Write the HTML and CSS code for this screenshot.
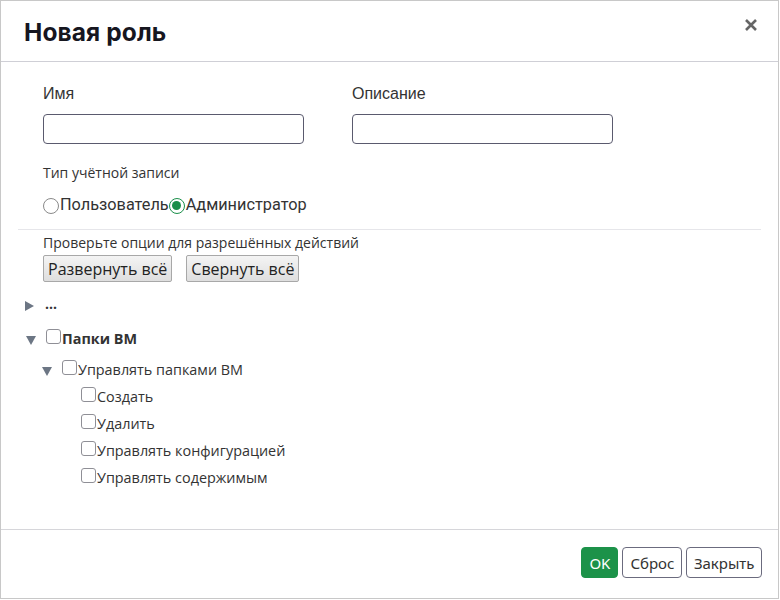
FILE: index.html
```html
<!DOCTYPE html>
<html lang="ru">
<head>
<meta charset="utf-8">
<link rel="stylesheet" href="styles.css">
</head>
<body>
<div class="modal">
  <div class="modal-header">
    <h1 class="modal-title">Новая роль</h1>
    <button class="close" aria-label="Закрыть">
      <svg width="14" height="14" viewBox="0 0 14 14"><path d="M2 2L12 12M12 2L2 12" stroke="#666" stroke-width="2.6" stroke-linecap="butt"/></svg>
    </button>
  </div>
  <div class="modal-body">
    <div class="fields">
      <div class="field">
        <label class="field-label">Имя</label>
        <input class="text-input" type="text">
      </div>
      <div class="field">
        <label class="field-label">Описание</label>
        <input class="text-input" type="text">
      </div>
    </div>
    <div class="account">
      <div class="account-label">Тип учётной записи</div>
      <div class="radios">
        <label class="radio"><span class="radio-dot"></span>Пользователь</label>
        <label class="radio"><span class="radio-dot checked"></span>Администратор</label>
      </div>
    </div>
    <div class="perms">
      <div class="perms-label">Проверьте опции для разрешённых действий</div>
      <div class="perm-buttons">
        <button class="btn-gray">Развернуть всё</button>
        <button class="btn-gray">Свернуть всё</button>
      </div>
    </div>
    <ul class="tree">
      <li class="node lvl0 collapsed"><span class="tri right"></span><span class="dots">...</span></li>
      <li class="node lvl0b"><span class="tri down"></span><span class="cb"></span><b>Папки ВМ</b></li>
      <li class="node lvl1"><span class="tri down"></span><span class="cb"></span>Управлять папками ВМ</li>
      <li class="node lvl2"><span class="cb"></span>Создать</li>
      <li class="node lvl2"><span class="cb"></span>Удалить</li>
      <li class="node lvl2"><span class="cb"></span>Управлять конфигурацией</li>
      <li class="node lvl2"><span class="cb"></span>Управлять содержимым</li>
    </ul>
  </div>
  <div class="modal-footer">
    <button class="btn btn-ok">OK</button>
    <button class="btn btn-outline">Сброс</button>
    <button class="btn btn-outline btn-close">Закрыть</button>
  </div>
</div>
</body>
</html>
```
FILE: styles.css
```css
* { box-sizing: border-box; }
html, body { margin: 0; padding: 0; background: #fff; }
body { width: 780px; height: 600px; overflow: hidden; }

.modal {
  width: 779px;
  height: 599px;
  border: 1px solid #c8c8c8;
  display: flex;
  flex-direction: column;
  background: #fff;
  font-family: "Open Sans", sans-serif;
  color: #222;
}

.modal-header {
  height: 61px;
  border-bottom: 1px solid #cfcfd6;
  display: flex;
  align-items: center;
  justify-content: space-between;
  padding: 0 20px 0 23px;
  flex: none;
}
.modal-title {
  margin: 0;
  font-family: Inter, sans-serif;
  font-weight: 700;
  font-size: 24.5px;
  color: #16161f;
  letter-spacing: 0.1px;
  padding-top: 2px;
}
.close {
  border: 0;
  background: none;
  padding: 0;
  width: 14px;
  height: 14px;
  margin-top: -12px;
  display: flex;
}

.modal-body {
  flex: 1;
  padding: 20px 17px 0 17px;
}

.fields {
  display: flex;
  gap: 48px;
  padding-left: 25px;
}
.field { display: flex; flex-direction: column; }
.field-label {
  font-family: "Liberation Sans", Arial, sans-serif;
  font-size: 16px;
  color: #333;
  height: 20px;
  line-height: 20px;
  margin-top: 2px;
}
.text-input {
  margin-top: 10px;
  width: 261px;
  height: 30px;
  border: 1px solid #5a5a6e;
  border-radius: 4px;
  background: #fff;
}

.account { padding-left: 25px; margin-top: 19px; }
.account-label {
  font-size: 14px;
  color: #333;
  line-height: 20px;
}
.radios {
  display: flex;
  margin-top: 11px;
  font-family: Roboto, sans-serif;
  font-size: 16.3px;
  color: #333;
  line-height: 22px;
}
.radio { display: flex; align-items: center; }
.radio-dot {
  width: 16px; height: 16px;
  border: 1px solid #8a8a8a;
  border-radius: 50%;
  margin-right: 1px;
  margin-top: 2px;
  background: #fff;
  position: relative;
}
.radio-dot.checked {
  border: 1.5px solid #1a8f4a;
}
.radio-dot.checked::after {
  content: "";
  position: absolute;
  left: 2px; top: 2px;
  width: 9px; height: 9px;
  border-radius: 50%;
  background: #1a8f4a;
}

.perms {
  margin-top: 13px;
  border-top: 1px solid #e6e6ea;
  padding: 3px 0 0 25px;
}
.perms-label { font-size: 14px; color: #333; line-height: 20px; }
.perm-buttons { display: flex; gap: 14px; margin-top: 2px; }
.btn-gray {
  font-family: "Open Sans", sans-serif;
  font-size: 16px;
  color: #222;
  height: 27px;
  padding: 0 4px;
  border: 1px solid #a8a8a8;
  border-radius: 2px;
  background: linear-gradient(#f4f4f4, #dedede);
  line-height: 24px;
}

.tree {
  list-style: none;
  margin: 14px 0 0 0;
  padding: 0;
  font-size: 14.4px;
  color: #333;
}
.node { display: flex; align-items: center; height: 27px; }
.lvl0 { padding-left: 7px; height: 20px; }
.lvl0b { padding-left: 7px; margin-top: 9px; height: 27px; }
.lvl1 { padding-left: 24px; margin-top: 4px; }
.lvl2 { padding-left: 63px; }
.lvl0b b { font-weight: 700; color: #333; }

.tri { width: 0; height: 0; display: inline-block; }
.tri.right {
  border-top: 5px solid transparent;
  border-bottom: 5px solid transparent;
  border-left: 9px solid #6c7684;
  margin-right: 11px;
}
.tri.down {
  border-left: 5px solid transparent;
  border-right: 5px solid transparent;
  border-top: 9px solid #6c7684;
  margin: 3px 10px 0 0;
}
.lvl0b .tri.down { margin-left: 1px; }
.dots { font-size: 14px; font-weight: 700; line-height: 10px; margin-top: -4px; color: #333; }

.cb {
  width: 15px; height: 15px;
  border: 1px solid #8f8f96;
  border-radius: 3px;
  background: #fff;
  margin-right: 1px;
  margin-top: -4px;
}

.modal-footer {
  flex: none;
  height: 69px;
  border-top: 1px solid #d6d6da;
  display: flex;
  justify-content: flex-end;
  align-items: flex-start;
  gap: 4px;
  padding: 17px 16px 0 0;
}
.btn {
  font-family: "Noto Sans", sans-serif;
  font-size: 15px;
  height: 31px;
  border-radius: 4px;
  padding: 0 7px;
}
.btn-close { padding: 0 6.5px; }
.btn-ok {
  background: #1c9249;
  color: #fff;
  border: 1px solid #1c9249;
  width: 37px;
  padding: 0;
}
.btn-outline {
  background: #fff;
  color: #333;
  border: 1px solid #6b6b7e;
}
```
